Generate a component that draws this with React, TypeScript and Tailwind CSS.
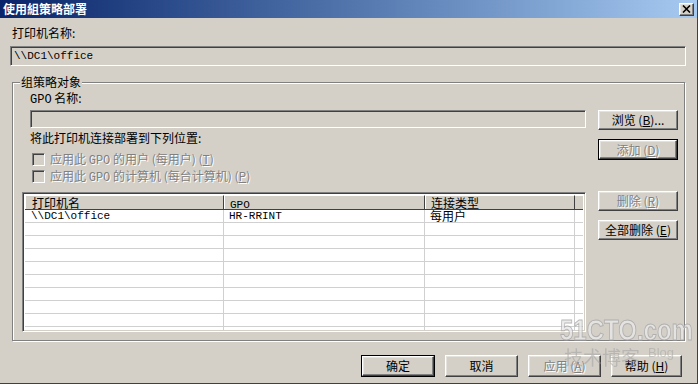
import React from "react";

const raised =
  "border border-t-white border-l-white border-r-[#404040] border-b-[#404040] shadow-[inset_-1px_-1px_0_#808080,inset_1px_1px_0_#e4e2dc]";
const sunken =
  "border border-t-[#808080] border-l-[#808080] border-b-white border-r-white shadow-[inset_1px_1px_0_#404040,inset_-1px_-1px_0_#d4d0c8]";
const disabledText = "text-[#808080] [text-shadow:1px_1px_0_#ffffff]";
const mono = { fontFamily: '"Liberation Mono", monospace' };

function Btn({
  children,
  w,
  h,
  disabled,
  def,
}: {
  children: React.ReactNode;
  w: string;
  h: string;
  disabled?: boolean;
  def?: boolean;
}) {
  const inner = (
    <div
      className={`${raised} flex items-center justify-center bg-[#d4d0c8] w-full h-full ${
        disabled ? disabledText : "text-black"
      }`}
    >
      {children}
    </div>
  );
  if (def) {
    return <div className={`${w} ${h} border border-black flex`}>{inner}</div>;
  }
  return <div className={`${w} ${h} flex`}>{inner}</div>;
}

function Check({ label }: { label: React.ReactNode }) {
  return (
    <div className="flex items-center h-[13px]">
      <div className={`${sunken} w-[13px] h-[13px] bg-[#d4d0c8]`} />
      <span className={`ml-[5px] leading-[13px] ${disabledText}`}>{label}</span>
    </div>
  );
}

export default function App() {
  const rows = Array.from({ length: 10 });
  return (
    <div
      className="relative w-[698px] h-[384px] bg-[#d4d0c8] overflow-hidden text-[12px] text-black border-r border-b border-r-[#404040] border-b-[#404040]"
      style={{ fontFamily: '"Noto Sans CJK SC", "Noto Sans", sans-serif' }}
    >
      {/* title bar */}
      <div className="h-[18px] flex items-center justify-between bg-gradient-to-r from-[#0a246a] to-[#a6caf0] pl-[3px] pr-[3px]">
        <span className="text-white font-bold text-[12px] leading-[14px]">使用組策略部署</span>
        <div className={`${raised} w-[15px] h-[13px] bg-[#d4d0c8] flex items-center justify-center`}>
          <svg width="9" height="8" viewBox="0 0 9 8">
            <path d="M1 0.5 L8 7.5 M8 0.5 L1 7.5" stroke="#000" strokeWidth="1.6" />
          </svg>
        </div>
      </div>

      {/* printer name */}
      <div className="ml-[12px] mt-[8px] h-[14px] leading-[14px]">打印机名称:</div>
      <div
        className={`${sunken} ml-[10px] mt-[6px] w-[676px] h-[20px] bg-[#d4d0c8] flex items-center pl-[3px] text-[11px]`}
        style={mono}
      >
        \\DC1\office
      </div>

      {/* group box */}
      <div className="relative ml-[12px] mt-[16px] w-[673px] h-[259px] border border-[#808080] shadow-[1px_1px_0_#ffffff,inset_1px_1px_0_#ffffff]">
        <div className="absolute left-[7px] top-[-8px] px-[1px] bg-[#d4d0c8] leading-[14px]">组策略对象</div>
        <div className="flex pl-[9px]">
          {/* left column */}
          <div className="w-[564px] flex flex-col">
            <div className="ml-[8px] mt-[8px] h-[14px] leading-[14px]">
              <span style={mono} className="text-[12px]">GPO</span> 名称:
            </div>
            <div className={`${sunken} ml-[8px] mt-[5px] w-[556px] h-[18px] bg-[#d4d0c8]`} />
            <div className="ml-[8px] mt-[3px] h-[14px] leading-[14px]">将此打印机连接部署到下列位置:</div>
            <div className="ml-[10px] mt-[8px]">
              <Check
                label={
                  <>
                    应用此 <span className="text-[12px]" style={mono}>GPO</span> 的用户 (每用户) (<u>T</u>)
                  </>
                }
              />
            </div>
            <div className="ml-[10px] mt-[4px]">
              <Check
                label={
                  <>
                    应用此 <span className="text-[12px]" style={mono}>GPO</span> 的计算机 (每台计算机) (<u>P</u>)
                  </>
                }
              />
            </div>
            {/* list view */}
            <div className={`${sunken} mt-[9px] w-[564px] h-[140px] bg-white p-[2px] overflow-hidden`}>
              <div className="flex h-[15px] bg-[#d4d0c8] leading-[13px] border-b border-b-[#404040]">
                <div className="w-[199px] pl-[6px] border-r border-r-[#404040] border-t border-t-white border-l border-l-white">打印机名</div>
                <div className="w-[201px] pl-[5px] border-r border-r-[#404040] border-t border-t-white border-l border-l-white">
                  <span className="text-[11px]" style={mono}>GPO</span>
                </div>
                <div className="w-[150px] pl-[5px] border-r border-r-[#404040] border-t border-t-white border-l border-l-white">连接类型</div>
                <div className="flex-1 border-t border-t-white" />
              </div>
              {rows.map((_, i) => (
                <div key={i} className="flex h-[13px] border-b border-b-[#d0d0d0] leading-[12px]">
                  <div className="w-[199px] pl-[6px] border-r border-r-[#d0d0d0] text-[11px]" style={mono}>
                    {i === 0 ? "\\\\DC1\\office" : ""}
                  </div>
                  <div className="w-[201px] pl-[5px] border-r border-r-[#d0d0d0] text-[11px]" style={mono}>
                    {i === 0 ? "HR-RRINT" : ""}
                  </div>
                  <div className="w-[150px] pl-[5px] border-r border-r-[#d0d0d0]">{i === 0 ? "每用户" : ""}</div>
                  <div className="flex-1" />
                </div>
              ))}
            </div>
          </div>
          {/* right column */}
          <div className="ml-[12px] w-[80px] flex flex-col">
            <div className="mt-[27px]">
              <Btn w="w-[80px]" h="h-[20px]">
                浏览 (<u>B</u>)...
              </Btn>
            </div>
            <div className="mt-[9px]">
              <Btn w="w-[80px]" h="h-[21px]" disabled def>
                添加 (<u>D</u>)
              </Btn>
            </div>
            <div className="mt-[31px]">
              <Btn w="w-[80px]" h="h-[20px]" disabled>
                删除 (<u>R</u>)
              </Btn>
            </div>
            <div className="mt-[9px]">
              <Btn w="w-[80px]" h="h-[20px]">
                全部删除 (<u>E</u>)
              </Btn>
            </div>
          </div>
        </div>
      </div>

      {/* bottom buttons */}
      <div className="flex ml-[361px] mt-[14px] gap-[10px]">
        <Btn w="w-[74px]" h="h-[22px]" def>
          确定
        </Btn>
        <Btn w="w-[73px]" h="h-[22px]">
          取消
        </Btn>
        <Btn w="w-[73px]" h="h-[22px]" disabled>
          应用 (<u>A</u>)
        </Btn>
        <Btn w="w-[71px]" h="h-[22px]">
          帮助 (<u>H</u>)
        </Btn>
      </div>

      {/* watermark */}
      <div className="absolute left-[560px] top-[314px] w-[130px] pointer-events-none select-none opacity-80">
        <div
          className="text-[30px] font-bold leading-[32px] text-[#e8e8e8] [-webkit-text-stroke:1px_#a8a8a8] scale-x-[0.8] origin-left whitespace-nowrap"
          style={{ fontFamily: '"Liberation Sans", sans-serif' }}
        >
          51CTO.com
        </div>
        <div className="flex items-start ml-[4px] mt-[-1px] whitespace-nowrap">
          <span className="text-[19px] leading-[24px] text-[#9c9c9c] opacity-60">技术博客</span>
          <span
            className="ml-[8px] text-[13px] leading-[15px] text-[#a0a0a0] opacity-60"
            style={{ fontFamily: '"Liberation Sans", sans-serif' }}
          >
            Blog
          </span>
        </div>
      </div>
    </div>
  );
}
